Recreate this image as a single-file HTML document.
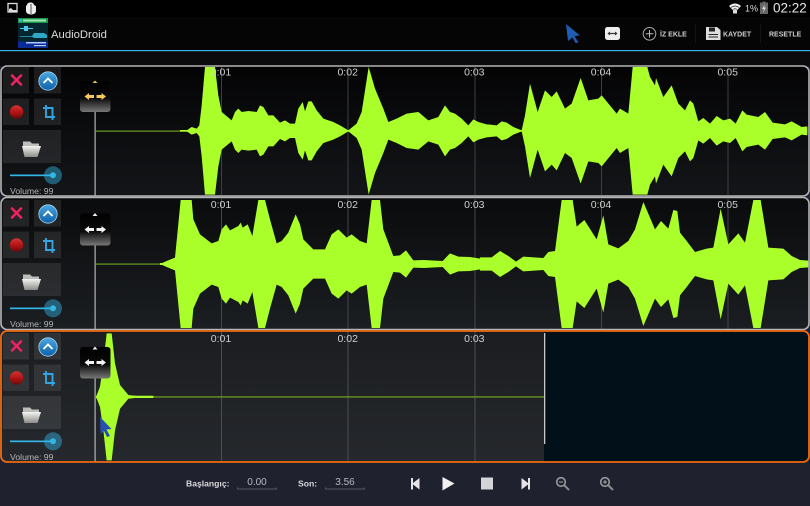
<!DOCTYPE html>
<html><head><meta charset="utf-8"><style>
html,body{margin:0;padding:0;width:810px;height:506px;overflow:hidden;background:#20212f}
svg{display:block}
text{font-family:"Liberation Sans",sans-serif}
</style></head><body>
<svg width="810" height="506" viewBox="0 0 810 506" xmlns="http://www.w3.org/2000/svg">
<defs>
<linearGradient id="p1" x1="0" y1="0" x2="0" y2="1"><stop offset="0" stop-color="#040405"/><stop offset="1" stop-color="#131518"/></linearGradient>
<linearGradient id="p2" x1="0" y1="0" x2="0" y2="1"><stop offset="0" stop-color="#0a0b0c"/><stop offset="1" stop-color="#1b1e22"/></linearGradient>
<linearGradient id="p3" x1="0" y1="0" x2="0" y2="1"><stop offset="0" stop-color="#1b1d20"/><stop offset="1" stop-color="#25282c"/></linearGradient>
<linearGradient id="h" x1="0" y1="0" x2="0" y2="1"><stop offset="0" stop-color="#000"/><stop offset=".55" stop-color="#0a0a0a"/><stop offset="1" stop-color="#777"/></linearGradient>
<linearGradient id="rec" x1="0" y1="0" x2="0" y2="1"><stop offset="0" stop-color="#d83030"/><stop offset=".6" stop-color="#a81212"/><stop offset="1" stop-color="#6c0808"/></linearGradient>
<linearGradient id="up" x1="0" y1="0" x2="0" y2="1"><stop offset="0" stop-color="#4aa8e0"/><stop offset="1" stop-color="#0c5fa8"/></linearGradient>
<linearGradient id="fo" x1="0" y1="0" x2="0" y2="1"><stop offset="0" stop-color="#f4f4f2"/><stop offset="1" stop-color="#8c8c88"/></linearGradient>
<g id="ctl">
<g fill="#fff" fill-opacity=".09">
<rect x="3" y="0" width="26" height="26.500"/>
<rect x="34" y="0" width="27" height="26.500"/>
<rect x="3" y="31.500" width="26" height="26.500"/>
<rect x="34" y="31.500" width="27" height="26.500"/>
<rect x="3" y="63" width="58" height="33"/>
</g>
<path d="M12 8.500L21 17.500M21 8.500L12 17.500" stroke="#ee2260" stroke-width="2.600" stroke-linecap="round"/>
<circle cx="48" cy="14" r="9.200" fill="url(#up)" stroke="#a9d6f0" stroke-width=".8"/>
<path d="M43.500 16L48 11.500L52.500 16" fill="none" stroke="#fff" stroke-width="1.900"/>
<circle cx="16.500" cy="45" r="6.700" fill="url(#rec)"/>
<path d="M46 38V50H55M43 41H52.500V53" fill="none" stroke="#33a5e0" stroke-width="1.900"/>
<path d="M23 74.500H30L32 76.500H39V81H23Z" fill="#bdbdbb"/>
<path d="M22 79H41L37.500 90H24.500Z" fill="url(#fo)"/>
<rect x="10" y="107.500" width="43" height="1.700" fill="#33b5e5"/>
<circle cx="53" cy="108.300" r="9" fill="#33b5e5" fill-opacity=".45"/>
<circle cx="53" cy="108.300" r="3" fill="#33b5e5"/>
<text x="10" y="127" font-size="8.700" fill="#b4b4b4">Volume: 99</text>
<rect x="94.500" y="45" width="1.200" height="84" fill="#b5b5b5"/>
</g>
<g id="wA">
<polygon transform="translate(180,62) scale(.33333)" points="0,206 20,205 35,195 50,200 58,190 65,130 75,15 105,15 115,100 125,150 155,175 165,150 175,140 185,150 205,147 230,150 240,130 250,135 265,160 280,160 300,182 315,175 330,185 345,185 355,140 368,120 375,148 385,118 395,118 410,145 430,170 460,180 480,190 505,205 530,185 545,150 566,15 585,80 610,140 625,180 650,170 680,155 715,150 745,175 775,165 795,130 810,150 825,155 845,170 865,190 880,172 895,180 920,187 931,188 931,209 0,209"/>
<polygon transform="translate(490,62) scale(.33333)" points="0,188 20,190 35,178 50,182 70,195 95,205 105,160 120,65 143,150 165,85 185,105 200,88 225,140 245,125 272,48 295,115 325,110 335,100 380,155 390,140 415,155 428,15 472,15 480,45 495,70 498,48 520,105 545,70 565,125 585,145 600,115 610,125 625,178 640,168 660,185 680,162 700,175 720,170 737,185 757,145 770,158 805,165 825,150 848,182 885,187 905,178 935,195 952,193 952,209 0,209"/>
</g>
<g id="wB">
<polygon transform="translate(150,196) scale(.33333)" points="30,204 50,195 75,185 92,12 125,12 130,70 150,115 185,142 205,135 215,100 228,85 240,103 265,90 272,80 278,95 293,85 307,120 325,12 345,12 360,70 380,142 395,135 415,110 437,55 450,85 460,130 490,160 525,160 545,115 565,100 590,125 605,115 630,135 650,142 665,12 690,12 700,100 730,180 750,178 768,163 790,193 820,192 878,195 900,172 925,182 960,183 991,188 991,207 30,207"/>
<polygon transform="translate(480,196) scale(.33333)" points="0,184 35,184 60,165 85,180 108,197 130,182 190,186 205,168 225,165 245,12 278,12 290,92 313,72 350,130 370,58 385,145 415,157 445,135 465,100 490,18 510,65 525,100 543,75 565,98 580,42 592,45 600,110 620,135 645,168 680,158 700,155 722,38 745,145 775,112 795,140 820,12 842,12 865,155 910,158 935,180 960,192 985,194 985,207 0,207"/>
</g>
<g id="wC">
<polygon transform="translate(0,330) scale(.33333)" points="288,201 300,170 310,100 320,10 335,10 345,100 360,165 385,195 410,198 460,198 460,204 288,204"/>
</g>
</defs>

<!-- top -->
<rect width="810" height="50" fill="#000"/>
<rect y="17" width="810" height="33" fill="#050506"/>
<rect y="50" width="810" height="1.300" fill="#33b5e5"/>
<rect y="51.300" width="810" height="15" fill="#0b0b0d"/>
<!-- status -->
<rect x="8" y="3.500" width="9" height="8.500" fill="none" stroke="#ddd" stroke-width="1.300"/>
<path d="M9 11.500V9L11 8L13 10L16.500 10V11.500Z" fill="#ddd"/>
<path d="M27 5C27 3.500 28.500 2.500 30.500 2.500S34 3.500 34 5L36 6V11C36 13.500 33 14.500 31 14.500S26 13.500 26 11V6Z" fill="#eee"/>
<rect x="30.600" y="4" width=".8" height="10" fill="#333"/>
<path d="M729 6Q735 1 741 6L735 12.500Z" fill="#f0f0f0"/>
<path d="M731 7.500Q735 4.500 739 7.500M733 9.500Q735 8 737 9.500" fill="none" stroke="#222" stroke-width=".7"/>
<rect x="733" y="9.500" width="4" height="4" fill="#ddd"/>
<text x="745" y="11.500" font-size="9" fill="#ddd">1%</text>
<rect x="760" y="2.500" width="8" height="11.500" fill="#666"/>
<rect x="762.500" y="1.500" width="3" height="1.200" fill="#666"/>
<path d="M765 4L762 9H764L763 13L766 7.500H764Z" fill="#ddd"/>
<text x="773" y="12.700" font-size="13.500" fill="#e6e6e6">02:22</text>
<!-- logo -->
<rect x="18" y="18" width="30" height="30" fill="#05262e"/>
<rect x="18" y="18" width="30" height="5" fill="#1a9a4a"/>
<rect x="19" y="19" width="3" height="3" fill="#3ab0e0"/>
<rect x="23" y="19.500" width="23" height="2" fill="#a8e8b8"/>
<rect x="18" y="41.500" width="30" height="6.500" fill="#0a2a9a"/>
<rect x="26" y="42" width="20" height="1.500" fill="#b0c8f0"/>
<rect x="34" y="45" width="12" height="1.200" fill="#b0c8f0"/>
<rect x="20" y="28" width="13" height="1" fill="#4ac8e8"/>
<rect x="24" y="26" width="4" height="5" fill="#4ac8e8"/>
<path d="M20 36H32L34 33H44L47 35V38H34L32 36.800H20Z" fill="#2fa8c8"/>
<text x="51" y="38" font-size="11.300" fill="#dcdcdc">AudioDroid</text>
<!-- action icons -->
<path d="M566 24L580 35.500L574.500 36L578.500 42.500L575.500 43L572.500 37.500L568 41Z" fill="#1f5cb4"/>
<rect x="605" y="27" width="15" height="13" rx="2.500" fill="#eee"/>
<path d="M608 33.500H617" stroke="#333" stroke-width="1.200"/>
<path d="M610 31.500L607.500 33.500L610 35.500ZM615 31.500L617.500 33.500L615 35.500Z" fill="#333"/>
<circle cx="649.500" cy="33.800" r="6.300" fill="none" stroke="#aaa" stroke-width="1"/>
<path d="M649.500 30V37.600M645.700 33.800H653.300" stroke="#bbb" stroke-width="1"/>
<text x="660" y="36.300" font-size="7" font-weight="bold" fill="#d0d0d0">İZ EKLE</text>
<rect x="695" y="24" width="1" height="19" fill="#141414"/>
<path d="M706 27H717L720.500 30V40H706Z" fill="#ddd"/>
<rect x="709" y="27.500" width="6" height="4" fill="#222"/>
<rect x="708.500" y="34" width="9.500" height="1" fill="#222"/><rect x="708.500" y="36.500" width="9.500" height="1" fill="#222"/>
<text x="723" y="36.300" font-size="7" font-weight="bold" fill="#d0d0d0">KAYDET</text>
<rect x="760" y="24" width="1" height="19" fill="#141414"/>
<text x="769" y="36.300" font-size="7" font-weight="bold" fill="#d0d0d0">RESETLE</text>

<!-- track 1 -->
<rect x="1" y="66" width="808" height="130" rx="6" fill="url(#p1)"/>
<g fill="#3d3f42"><rect x="221" y="67" width="1" height="128"/><rect x="347.500" y="67" width="1" height="128"/><rect x="474.500" y="67" width="1" height="128"/><rect x="601" y="67" width="1" height="128"/><rect x="727.500" y="67" width="1" height="128"/></g>
<rect x="96" y="130.500" width="92" height="1.200" fill="#6f9a22"/>
<g fill="#aaff2b"><use href="#wA"/><use href="#wA" transform="translate(0,261.670) scale(1,-1)"/></g>
<g font-size="10.500" fill="#cfcfcf" text-anchor="middle"><text x="221" y="75.500">0:01</text><text x="347.700" y="75.500">0:02</text><text x="474.300" y="75.500">0:03</text><text x="601" y="75.500">0:04</text><text x="727.700" y="75.500">0:05</text></g>
<use href="#ctl" y="67"/>
<rect x="80" y="81" width="30.500" height="31" rx="3" fill="url(#h)"/>
<path d="M95 80.500L92.500 83H97.500Z" fill="#f0c050"/>
<path d="M84.500 96.500L89 93V95H94V98H89V100ZM106 96.500L101.500 93V95H96.500V98H101.500V100Z" fill="#f5c858"/>
<rect x="1" y="66" width="808" height="130" rx="6" fill="none" stroke="#b4b4b4" stroke-width="1.600"/>

<!-- track 2 -->
<rect x="1" y="198" width="808" height="132" rx="6" fill="url(#p2)"/>
<g fill="#44464a"><rect x="221" y="199" width="1" height="130"/><rect x="347.500" y="199" width="1" height="130"/><rect x="474.500" y="199" width="1" height="130"/><rect x="601" y="199" width="1" height="130"/><rect x="727.500" y="199" width="1" height="130"/></g>
<rect x="96" y="263.500" width="72" height="1.200" fill="#6f9a22"/>
<g fill="#aaff2b"><use href="#wB"/><use href="#wB" transform="translate(0,528) scale(1,-1)"/></g>
<g font-size="10.500" fill="#cfcfcf" text-anchor="middle"><text x="221" y="208">0:01</text><text x="347.700" y="208">0:02</text><text x="474.300" y="208">0:03</text><text x="601" y="208">0:04</text><text x="727.700" y="208">0:05</text></g>
<use href="#ctl" y="200"/>
<rect x="80" y="213.500" width="30.500" height="32" rx="3" fill="url(#h)"/>
<path d="M95 213L92.500 216H97.500Z" fill="#eee"/>
<path d="M84.500 229.500L89 226V228H94V231H89V233ZM106 229.500L101.500 226V228H96.500V231H101.500V233Z" fill="#f2f2f2"/>
<rect x="1" y="197.500" width="808" height="132" rx="6" fill="none" stroke="#b4b4b4" stroke-width="1.600"/>

<!-- track 3 -->
<rect x="1" y="331" width="808" height="131" rx="6" fill="#011019"/>
<path d="M7 331H544V462H7Q1 462 1 456V337Q1 331 7 331Z" fill="url(#p3)"/>
<g fill="#4b4d51"><rect x="221" y="332" width="1" height="129"/><rect x="347.500" y="332" width="1" height="129"/><rect x="474.500" y="332" width="1" height="129"/></g>
<rect x="153" y="396.300" width="391" height="1.300" fill="#6f9a22"/>
<g fill="#aaff2b"><use href="#wC"/><use href="#wC" transform="translate(0,793.700) scale(1,-1)"/></g>
<g font-size="10.500" fill="#cfcfcf" text-anchor="middle"><text x="221" y="342">0:01</text><text x="347.700" y="342">0:02</text><text x="474.300" y="342">0:03</text></g>
<rect x="544" y="333" width="1.300" height="111" fill="#c8c8c8"/>
<use href="#ctl" y="333"/>
<path d="M100 417L111.500 429L106.500 429.500L110 436L107 437L104 431L100.500 434Z" fill="#2550b0"/>
<rect x="80" y="347" width="30.500" height="31.500" rx="3" fill="url(#h)"/>
<path d="M95 346.500L92.500 349.500H97.500Z" fill="#eee"/>
<path d="M84.500 362.500L89 359V361H94V364H89V366ZM106 362.500L101.500 359V361H96.500V364H101.500V366Z" fill="#f2f2f2"/>
<rect x="1" y="331" width="808" height="131" rx="6" fill="none" stroke="#ee6a12" stroke-width="1.800"/>

<!-- bottom -->
<text x="186" y="486.500" font-size="8.600" font-weight="bold" fill="#d8d8dc">Başlangıç:</text>
<text x="257" y="485" font-size="10" fill="#b8b8c0" text-anchor="middle">0.00</text>
<path d="M237.500 487.500V489H276.500V487.500" fill="none" stroke="#555666" stroke-width="1"/>
<text x="298" y="486.500" font-size="8.600" font-weight="bold" fill="#d8d8dc">Son:</text>
<text x="345" y="485" font-size="10" fill="#b8b8c0" text-anchor="middle">3.56</text>
<path d="M325.500 487.500V489H364.500V487.500" fill="none" stroke="#555666" stroke-width="1"/>
<path d="M411 478H413V483L419.500 478V489.500L413 484.500V489.500H411Z" fill="#e4e4e8"/>
<path d="M442.500 477L454.500 483.500L442.500 490.500Z" fill="#f0f0f0"/>
<rect x="481" y="477.500" width="12" height="12" fill="#d4d4d8"/>
<path d="M530 478H528V483L521.500 478V489.500L528 484.500V489.500H530Z" fill="#e4e4e8"/>
<circle cx="561" cy="482" r="4.300" fill="none" stroke="#9a9a9e" stroke-width="1.600"/>
<path d="M564.500 485.500L569 490" stroke="#8a8a8e" stroke-width="2"/>
<path d="M559 482H563" stroke="#aaa" stroke-width="1"/>
<circle cx="605" cy="482" r="4.300" fill="none" stroke="#9a9a9e" stroke-width="1.600"/>
<path d="M608.500 485.500L613 490" stroke="#8a8a8e" stroke-width="2"/>
<path d="M603 482H607M605 480V484" stroke="#aaa" stroke-width="1"/>
</svg>
</body></html>
